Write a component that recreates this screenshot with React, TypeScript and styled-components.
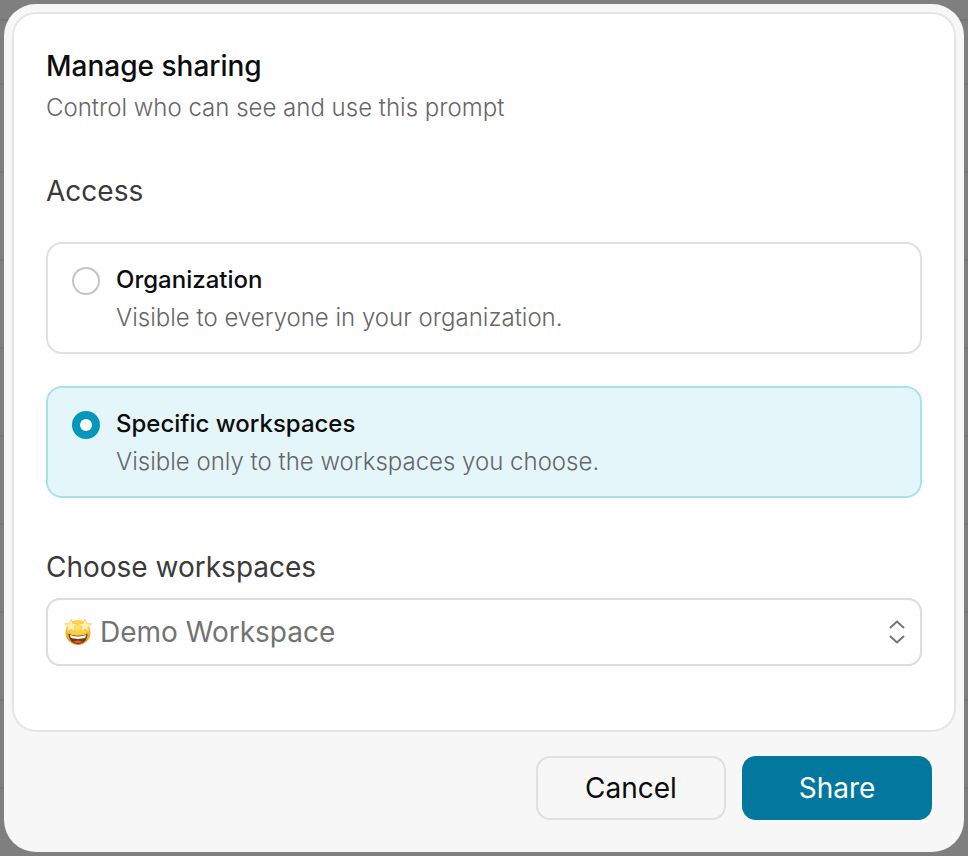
import React from 'react';
import styled, { createGlobalStyle } from 'styled-components';

const GlobalStyle = createGlobalStyle`
	html, body {
		margin: 0;
		padding: 0;
		height: 100%;
		background: #7f7f7f;
		font-family: Inter, "Liberation Sans", sans-serif;
	}
	* {
		box-sizing: border-box;
	}
`;

const Overlay = styled.div`
	width: 968px;
	height: 856px;
	padding: 4px;
	background: repeating-linear-gradient(
		to bottom,
		#757575 0,
		#757575 2px,
		#7f7f7f 2px,
		#7f7f7f 88px
	);
	background-position: 0 83px;
	background-color: #7f7f7f;
`;

const Dialog = styled.div`
	height: 848px;
	display: flex;
	flex-direction: column;
	padding: 8px;
	background: #f7f7f7;
	border-radius: 32px;
`;

const Panel = styled.div`
	height: 720px;
	padding: 34px 32px 0;
	background: #fff;
	border: 2px solid #e5e5e5;
	border-radius: 24px;
`;

const Title = styled.h2`
	margin: 0;
	font-size: 28px;
	line-height: 36px;
	font-weight: 450;
	color: #0d0d0d;
`;

const Subtitle = styled.p`
	margin: 6px 0 0;
	font-size: 24px;
	line-height: 36px;
	font-weight: 300;
	color: #666;
`;

const SectionLabel = styled.div<{ $top: number }>`
	margin-top: ${({ $top }) => $top}px;
	font-size: 28px;
	line-height: 36px;
	font-weight: 400;
	color: #3a3a3a;
`;

const Options = styled.div`
	display: flex;
	flex-direction: column;
	gap: 32px;
	margin-top: 33px;
`;

const Option = styled.div<{ $selected?: boolean }>`
	height: 112px;
	display: flex;
	gap: 16px;
	padding: 19px 24px;
	background: ${({ $selected }) => ($selected ? '#e4f6fa' : '#fff')};
	border: 2px solid ${({ $selected }) => ($selected ? '#a5e1ee' : '#e0e0e0')};
	border-radius: 16px;
`;

const Radio = styled.span<{ $selected?: boolean }>`
	width: 28px;
	height: 28px;
	margin-top: 4px;
	flex-shrink: 0;
	display: flex;
	align-items: center;
	justify-content: center;
	border-radius: 50%;
	background: ${({ $selected }) => ($selected ? '#0497bb' : '#fff')};
	border: 2px solid ${({ $selected }) => ($selected ? '#0497bb' : '#c4c4c4')};

	&::after {
		content: '';
		display: ${({ $selected }) => ($selected ? 'block' : 'none')};
		width: 12px;
		height: 12px;
		border-radius: 50%;
		background: #fff;
	}
`;

const OptionText = styled.div`
	display: flex;
	flex-direction: column;
	gap: 4px;
`;

const OptionTitle = styled.div`
	font-size: 24px;
	line-height: 34px;
	font-weight: 450;
	color: #0d0d0d;
`;

const OptionHint = styled.div`
	font-size: 24px;
	line-height: 34px;
	font-weight: 300;
	color: #666;
`;

const Select = styled.div`
	height: 68px;
	margin-top: 13px;
	display: flex;
	align-items: center;
	gap: 8px;
	padding: 0 14px 0 16px;
	background: #fff;
	border: 2px solid #dcdcdc;
	border-radius: 14px;
`;

const SelectValue = styled.span`
	flex: 1;
	font-size: 28px;
	color: #737373;
`;

const Footer = styled.div`
	flex: 1;
	display: flex;
	justify-content: flex-end;
	align-items: flex-start;
	gap: 16px;
	padding: 24px 24px 0 0;
`;

const Button = styled.button<{ $primary?: boolean }>`
	width: 190px;
	height: 64px;
	font-family: inherit;
	font-size: 28px;
	border-radius: 14px;
	border: 2px solid ${({ $primary }) => ($primary ? '#02789f' : '#e0e0e0')};
	background: ${({ $primary }) => ($primary ? '#02789f' : '#f7f7f7')};
	color: ${({ $primary }) => ($primary ? '#fff' : '#0d0d0d')};
`;

function starPoints(cx: number, cy: number, outer: number, inner: number): string {
	const points: string[] = [];
	for (let i = 0; i < 10; i++) {
		const radius = i % 2 === 0 ? outer : inner;
		const angle = -Math.PI / 2 + (i * Math.PI) / 5;
		points.push(`${cx + radius * Math.cos(angle)},${cy + radius * Math.sin(angle)}`);
	}
	return points.join(' ');
}

function StarStruckIcon() {
	return (
		<svg width="28" height="28" viewBox="0 0 28 28" aria-hidden="true">
			<defs>
				<radialGradient id="face" cx="50%" cy="30%" r="72%">
					<stop offset="0%" stopColor="#ffe566" />
					<stop offset="65%" stopColor="#fcbc2c" />
					<stop offset="100%" stopColor="#ec7f14" />
				</radialGradient>
			</defs>
			<circle cx="14" cy="14.500" r="12.500" fill="url(#face)" />
			<polygon points={starPoints(7, 8, 7, 3.200)} fill="#fff0b0" stroke="#f5b52e" strokeWidth="0.500" />
			<polygon points={starPoints(21, 8, 7, 3.200)} fill="#fff0b0" stroke="#f5b52e" strokeWidth="0.500" />
			<path d="M4.500 15.500C9 18.500 19 18.500 23.500 15.500 23.500 22 19 26 14 26S4.500 22 4.500 15.500z" fill="#6e3a0e" />
			<path d="M6 16.800C10 19 18 19 22 16.800L21.400 19.800C17.500 21.300 10.500 21.300 6.600 19.800z" fill="#fff" />
			<path d="M9 23.800C11.500 22.300 16.500 22.300 19 23.800 17.500 25.300 10.500 25.300 9 23.800z" fill="#d9662a" />
		</svg>
	);
}

function UpDownIcon() {
	return (
		<svg width="18" height="26" viewBox="0 0 18 26" fill="none" stroke="#737373" strokeWidth="2" aria-hidden="true">
			<path d="M2 9l7-6.500L16 9" />
			<path d="M2 17l7 6.500L16 17" />
		</svg>
	);
}

export default function App(): React.ReactElement {
	return (
		<Overlay>
			<GlobalStyle />
			<Dialog>
				<Panel>
					<Title>Manage sharing</Title>
					<Subtitle>Control who can see and use this prompt</Subtitle>
					<SectionLabel $top={47}>Access</SectionLabel>
					<Options>
						<Option>
							<Radio />
							<OptionText>
								<OptionTitle>Organization</OptionTitle>
								<OptionHint>Visible to everyone in your organization.</OptionHint>
							</OptionText>
						</Option>
						<Option $selected>
							<Radio $selected />
							<OptionText>
								<OptionTitle>Specific workspaces</OptionTitle>
								<OptionHint>Visible only to the workspaces you choose.</OptionHint>
							</OptionText>
						</Option>
					</Options>
					<SectionLabel $top={51}>Choose workspaces</SectionLabel>
					<Select>
						<StarStruckIcon />
						<SelectValue>Demo Workspace</SelectValue>
						<UpDownIcon />
					</Select>
				</Panel>
				<Footer>
					<Button>Cancel</Button>
					<Button $primary>Share</Button>
				</Footer>
			</Dialog>
		</Overlay>
	);
}
